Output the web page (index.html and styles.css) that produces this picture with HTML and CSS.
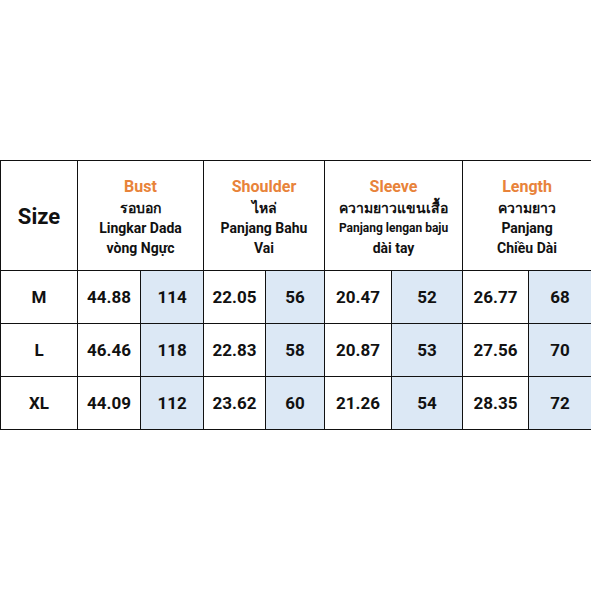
FILE: index.html
```html
<!DOCTYPE html>
<html lang="en">
<head>
<meta charset="UTF-8">
<title>Size Chart</title>
<link rel="stylesheet" href="styles.css">
</head>
<body>

<table class="chart">
    <colgroup>
        <col class="c-size">
        <col class="c-a"><col class="c-b">
        <col class="c-c"><col class="c-d">
        <col class="c-e"><col class="c-f">
        <col class="c-g"><col class="c-h">
    </colgroup>
    <thead>
        <tr>
            <th class="size-head">Size</th>
            <th colspan="2">
                <span class="en">Bust</span>
                <span>รอบอก</span>
                <span>Lingkar Dada</span>
                <span>vòng Ngực</span>
            </th>
            <th colspan="2">
                <span class="en">Shoulder</span>
                <span>ไหล่</span>
                <span>Panjang Bahu</span>
                <span>Vai</span>
            </th>
            <th colspan="2">
                <span class="en">Sleeve</span>
                <span>ความยาวแขนเสื้อ</span>
                <span class="small">Panjang lengan baju</span>
                <span>dài tay</span>
            </th>
            <th colspan="2">
                <span class="en">Length</span>
                <span>ความยาว</span>
                <span>Panjang</span>
                <span>Chiều Dài</span>
            </th>
        </tr>
    </thead>
    <tbody>
        <tr>
            <td>M</td>
            <td>44.88</td><td class="cm">114</td>
            <td>22.05</td><td class="cm">56</td>
            <td>20.47</td><td class="cm">52</td>
            <td>26.77</td><td class="cm">68</td>
        </tr>
        <tr>
            <td>L</td>
            <td>46.46</td><td class="cm">118</td>
            <td>22.83</td><td class="cm">58</td>
            <td>20.87</td><td class="cm">53</td>
            <td>27.56</td><td class="cm">70</td>
        </tr>
        <tr>
            <td>XL</td>
            <td>44.09</td><td class="cm">112</td>
            <td>23.62</td><td class="cm">60</td>
            <td>21.26</td><td class="cm">54</td>
            <td>28.35</td><td class="cm">72</td>
        </tr>
    </tbody>
</table>

</body>
</html>
```

FILE: styles.css
```css
body {
    margin: 0;
    background: #fff;
    font-family: Roboto, "Liberation Sans", sans-serif;
    color: #111;
}

.chart {
    margin-top: 160px;
    width: 591px;
    table-layout: fixed;
    border-collapse: collapse;
}

.c-size { width: 77px; }
.c-a { width: 63px; }
.c-b { width: 63px; }
.c-c { width: 62px; }
.c-d { width: 59px; }
.c-e { width: 67px; }
.c-f { width: 71px; }
.c-g { width: 66px; }
.c-h { width: 63px; }

.chart th,
.chart td {
    border: 1px solid #111;
    text-align: center;
    font-weight: bold;
    padding: 0;
}

.chart th {
    height: 107px;
    font-size: 14px;
    line-height: 20px;
    padding-top: 2px;
}

.chart th span {
    display: block;
}

.chart th .en {
    color: #e8833a;
    font-size: 16px;
    line-height: 22px;
}

.chart th .small {
    font-size: 12px;
}

.chart .size-head {
    font-size: 22px;
}

.chart td {
    height: 52px;
    font-size: 17px;
}

.chart .cm {
    background: #dce8f5;
}
```
